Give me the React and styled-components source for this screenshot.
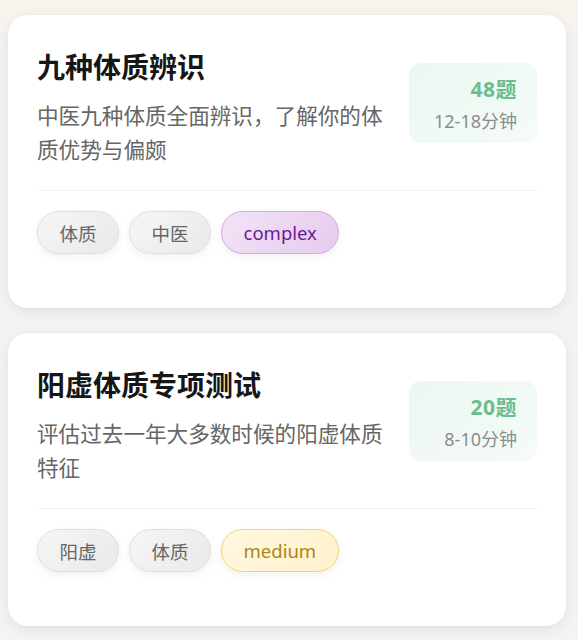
import React from "react";
import styled, { createGlobalStyle } from "styled-components";

const GlobalStyle = createGlobalStyle`
  html, body {
    margin: 0;
    padding: 0;
  }
  body {
    background: linear-gradient(180deg, #faf4ec 0px, #f5f3f3 40px, #f4f3f6 100%);
    font-family: "Noto Sans", "Noto Sans CJK SC", sans-serif;
    min-height: 640px;
  }
`;

const List = styled.div`
  display: flex;
  flex-direction: column;
  gap: 25px;
  padding: 15px 12px 20px 8px;
`;

const Card = styled.div`
  background: #fff;
  border-radius: 20px;
  box-shadow: 0 4px 16px rgba(0, 0, 0, 0.07), 0 1px 3px rgba(0, 0, 0, 0.03);
  padding: 34px 29px 54px;
`;

const Header = styled.div`
  display: flex;
  align-items: flex-start;
  gap: 16px;
`;

const Info = styled.div`
  flex: 1;
  min-width: 0;
`;

const Title = styled.h2`
  margin: 0;
  font-size: 28px;
  line-height: 36px;
  font-weight: 700;
  color: #161616;
`;

const Desc = styled.p`
  margin: 14px 0 0;
  font-size: 21.6px;
  line-height: 34px;
  color: #666;
`;

const Stats = styled.div`
  flex: none;
  width: 128px;
  height: 80px;
  box-sizing: border-box;
  margin-top: 14px;
  padding: 11px 20px 0 0;
  border-radius: 12px;
  background: linear-gradient(135deg, #ecf7f1 0%, #f5fbf8 100%);
  display: flex;
  flex-direction: column;
  align-items: flex-end;
`;

const Count = styled.div`
  font-size: 21px;
  line-height: 30px;
  font-weight: 700;
  letter-spacing: 0.5px;
  color: #6bbd8f;
`;

const Time = styled.div`
  margin-top: 4px;
  font-size: 18px;
  line-height: 26px;
  color: #8c8c8c;
`;

const Divider = styled.div`
  height: 1px;
  background: #f3f1f1;
  margin: 23px 0 20px;
`;

const Tags = styled.div`
  display: flex;
  gap: 10px;
`;

const tagTones = {
  plain: {
    bg: "linear-gradient(135deg, #f6f6f6 0%, #e9e9e9 100%)",
    border: "#dedede",
    color: "#666"
  },
  complex: {
    bg: "linear-gradient(135deg, #f2e4f6 0%, #e6caee 100%)",
    border: "#d9a6e3",
    color: "#6a1b92"
  },
  medium: {
    bg: "linear-gradient(135deg, #fff8df 0%, #fff1cc 100%)",
    border: "#f3d56b",
    color: "#ac8612"
  }
};

const Tag = styled.span`
  display: inline-flex;
  align-items: center;
  height: 43px;
  box-sizing: border-box;
  padding: 0 21.5px;
  border-radius: 22px;
  border: 1px solid ${p => tagTones[p.$tone].border};
  background: ${p => tagTones[p.$tone].bg};
  color: ${p => tagTones[p.$tone].color};
  font-size: 18.5px;
  box-shadow: 0 3px 8px rgba(0, 0, 0, 0.06);
`;

const tests = [
  {
    title: "九种体质辨识",
    desc: "中医九种体质全面辨识，了解你的体质优势与偏颇",
    count: 48,
    time: "12-18分钟",
    tags: ["体质", "中医"],
    level: "complex"
  },
  {
    title: "阳虚体质专项测试",
    desc: "评估过去一年大多数时候的阳虚体质特征",
    count: 20,
    time: "8-10分钟",
    tags: ["阳虚", "体质"],
    level: "medium"
  }
];

export default function App() {
  return (
    <>
      <GlobalStyle />
      <List>
        {tests.map(t => (
          <Card key={t.title}>
            <Header>
              <Info>
                <Title>{t.title}</Title>
                <Desc>{t.desc}</Desc>
              </Info>
              <Stats>
                <Count>{t.count}题</Count>
                <Time>{t.time}</Time>
              </Stats>
            </Header>
            <Divider />
            <Tags>
              {t.tags.map(tag => (
                <Tag key={tag} $tone="plain">
                  {tag}
                </Tag>
              ))}
              <Tag $tone={t.level}>{t.level}</Tag>
            </Tags>
          </Card>
        ))}
      </List>
    </>
  );
}
